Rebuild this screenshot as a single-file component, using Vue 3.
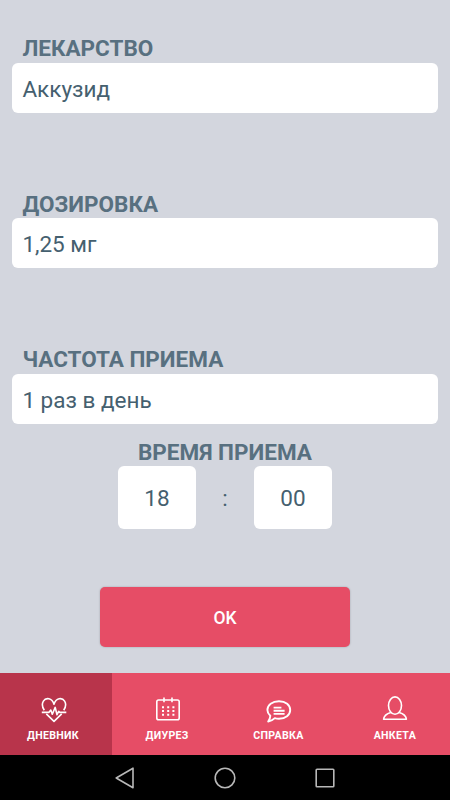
<template>
	<div class="screen">
		<main class="form">
			<div v-for="field in fields" :key="field.label" class="field">
				<div class="label">{{ field.label }}</div>
				<div class="value">{{ field.value }}</div>
			</div>

			<div class="label time-label">ВРЕМЯ ПРИЕМА</div>
			<div class="time">
				<div class="time-box">{{ hours }}</div>
				<div class="colon">:</div>
				<div class="time-box">{{ minutes }}</div>
			</div>

			<button class="ok">OK</button>
		</main>

		<nav class="tabs">
			<div
				v-for="tab in tabs"
				:key="tab.id"
				class="tab"
				:class="[tab.id, { active: tab.id === current }]"
				@click="current = tab.id"
			>
				<svg class="icon" viewBox="0 0 28 28">
					<g v-if="tab.id === 'diary'">
						<path d="M4.3 15.2C2.4 12.4 1.9 8.6 3.4 6.1C5.8 2.3 12 2.6 14 9.2C16 2.6 22.2 2.3 24.6 6.1C26.1 8.6 25.6 12.4 23.7 15.2M6.3 18.9L14 26.4L21.7 18.9" />
						<path d="M1.8 17.4H8.8L10.8 15L12.3 19.2L15.2 12.4L17 19.7L18.7 16.4L19.8 17.4H26.3" />
					</g>
					<g v-else-if="tab.id === 'diuresis'">
						<rect x="2.8" y="5" width="22.4" height="19.7" rx="1.8" />
						<path d="M10 2.4V7.2M18 2.4V7.2" />
						<path class="dots" d="M8 12.3H20.5M8 16H20.5M8 19.7H20.5" />
					</g>
					<g v-else-if="tab.id === 'help'">
						<path class="thick" d="M5.3 20.7C3.3 19 2.4 17.2 2.4 15C2.4 10.1 7.2 6.2 14 6.2S25.2 10.1 25.2 15S20.5 23.8 14 23.8C12.4 23.8 11 23.6 9.8 23.2C8 25 5.7 26.1 3.2 26.5C4.5 24.7 5.3 22.7 5.3 20.7Z" />
						<path class="lines" d="M8.6 12.6H16.4M8.6 15.8H19.6M8.6 18.9H19.6" />
					</g>
					<g v-else>
						<ellipse cx="14" cy="10.6" rx="6.5" ry="8.7" />
						<path d="M9.8 17.5C5.5 18.7 3 20.8 2.6 24.3H25.4C25 20.8 22.5 18.7 18.2 17.5" />
					</g>
				</svg>
				<span class="tab-text">{{ tab.text }}</span>
			</div>
		</nav>

		<footer class="system">
			<svg class="sys-icon" viewBox="0 0 24 24"><path d="M20 2.2V21.8L3.2 12Z" /></svg>
			<svg class="sys-icon" viewBox="0 0 24 24"><circle cx="12" cy="12" r="9.8" /></svg>
			<svg class="sys-icon" viewBox="0 0 24 24"><rect x="3.2" y="3.2" width="17.6" height="17.6" rx="0.8" /></svg>
		</footer>
	</div>
</template>

<script setup>
	import { ref } from 'vue'

	const fields = [
		{ label: 'ЛЕКАРСТВО', value: 'Аккузид' },
		{ label: 'ДОЗИРОВКА', value: '1,25 мг' },
		{ label: 'ЧАСТОТА ПРИЕМА', value: '1 раз в день' },
	]

	const hours = ref('18')
	const minutes = ref('00')

	const tabs = [
		{ id: 'diary', text: 'ДНЕВНИК' },
		{ id: 'diuresis', text: 'ДИУРЕЗ' },
		{ id: 'help', text: 'СПРАВКА' },
		{ id: 'profile', text: 'АНКЕТА' },
	]
	const current = ref('diary')
</script>

<style>
	body{ margin: 0; }
</style>

<style scoped>
	.screen{
		display: flex;
		flex-direction: column;
		width: 450px;
		height: 800px;
		background-color: #d3d6de;
		font-family: Roboto, "Liberation Sans", sans-serif;
		color: #45606f;
		overflow: hidden;
	}
	.form{
		flex: 1;
		display: flex;
		flex-direction: column;
		padding: 36.4px 12.5px 0 12.4px;
	}
	.field{ height: 155.4px; }
	.field:nth-child(3){ height: 92.4px; }
	.label{
		padding-left: 10px;
		margin-bottom: 1.6px;
		font-size: 22.5px;
		line-height: 25px;
		font-weight: 700;
		color: #587080;
	}
	.value{
		height: 50px;
		padding-left: 10px;
		border-radius: 6px;
		background-color: white;
		font-size: 22.5px;
		line-height: 52px;
	}
	.time-label{
		padding-left: 0;
		text-align: center;
	}
	.time{
		display: flex;
		justify-content: center;
		font-size: 22.5px;
		line-height: 65px;
		text-align: center;
	}
	.time-box{
		width: 78px;
		height: 63px;
		border-radius: 6px;
		background-color: white;
	}
	.colon{ width: 58px; }
	.ok{
		align-self: center;
		width: 250px;
		height: 60px;
		margin-top: 56.2px;
		padding: 2px 0 0;
		border: none;
		border-radius: 5px;
		background-color: #e64d66;
		box-shadow: 0 0 2px rgba(0, 0, 0, 0.25);
		color: white;
		font-family: inherit;
		font-size: 17.5px;
		font-weight: 500;
	}
	.tabs{
		display: flex;
		height: 82.5px;
		background-color: #e64d66;
	}
	.tab{
		width: 112.4px;
		display: flex;
		flex-direction: column;
		align-items: center;
		box-sizing: border-box;
		padding-top: 22px;
		color: white;
	}
	.diary{ padding-right: 5.4px; }
	.diuresis{ padding-right: 2px; }
	.help{ padding-right: 4px; }
	.profile{ padding-left: 4px; }
	.active{ background-color: #b8344b; }
	.icon{
		width: 28px;
		height: 28px;
		fill: none;
		stroke: white;
		stroke-width: 1.6;
		stroke-linejoin: round;
	}
	.thick{ stroke-width: 1.9; }
	.dots{
		stroke-width: 1.9;
		stroke-dasharray: 2 3.2;
	}
	.lines{ stroke-width: 1.9; }
	.tab-text{
		margin-top: 6px;
		margin-right: 1px;
		font-size: 10.6px;
		line-height: 14px;
		font-weight: 700;
		letter-spacing: 0.3px;
	}
	.system{
		display: flex;
		justify-content: center;
		align-items: center;
		gap: 76px;
		height: 45px;
		background-color: black;
	}
	.sys-icon{
		width: 24px;
		height: 24px;
		fill: none;
		stroke: #b8b8b8;
		stroke-width: 1.6;
		stroke-linejoin: round;
	}
</style>
